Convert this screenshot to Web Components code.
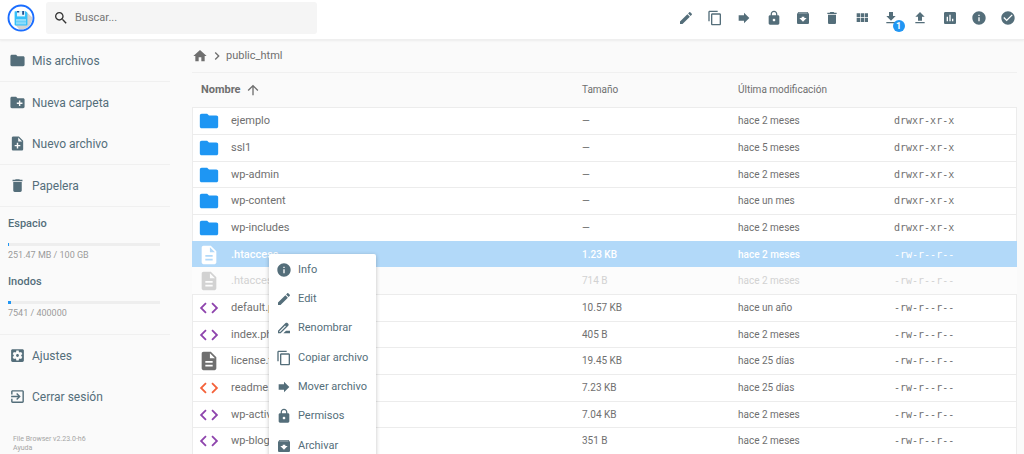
<!DOCTYPE html>
<html lang="es">
<head>
<meta charset="utf-8">
<meta name="viewport" content="width=device-width, initial-scale=1">
<title>public_html - File Browser</title>
<style>
html, body { margin: 0; height: 100%; overflow: hidden; }
body { background: #fafafa; color: #6f6f6f; font-family: Roboto, "Liberation Sans", sans-serif; font-size: 11px; }
</style>
</head>
<body>
<file-manager></file-manager>
<script>
const ICONS = {
  folder: 'M10 4H4c-1.1 0-1.99.9-1.99 2L2 18c0 1.1.9 2 2 2h16c1.1 0 2-.9 2-2V8c0-1.1-.9-2-2-2h-8l-2-2z',
  newFolder: 'M20 6h-8l-2-2H4c-1.11 0-1.99.89-1.99 2L2 18c0 1.11.89 2 2 2h16c1.11 0 2-.89 2-2V8c0-1.11-.89-2-2-2zm-1 8h-3v3h-2v-3h-3v-2h3V9h2v3h3v2z',
  newFile: 'M14 2H6c-1.1 0-1.99.9-1.99 2L4 20c0 1.1.89 2 1.99 2H18c1.1 0 2-.9 2-2V8l-6-6zm2 14h-3v3h-2v-3H8v-2h3v-3h2v3h3v2zm-3-7V3.5L18.5 9H13z',
  file: 'M14 2H6c-1.1 0-1.99.9-1.99 2L4 20c0 1.1.89 2 1.99 2H18c1.1 0 2-.9 2-2V8l-6-6zm2 16H8v-2h8v2zm0-4H8v-2h8v2zm-3-5V3.5L18.5 9H13z',
  code: 'M9.4 16.6L4.8 12l4.6-4.6L8 6l-6 6 6 6 1.4-1.4zm5.2 0l4.6-4.6-4.6-4.6L16 6l6 6-6 6-1.4-1.4z',
  edit: 'M3 17.25V21h3.75L17.81 9.94l-3.75-3.75L3 17.25zM20.71 7.04c.39-.39.39-1.02 0-1.41l-2.34-2.34c-.39-.39-1.02-.39-1.41 0l-1.83 1.83 3.75 3.75 1.83-1.83z',
  rename: 'M18.41 5.8L17.2 4.59c-.78-.78-2.05-.78-2.83 0l-2.68 2.68L3 15.96V20h4.04l8.74-8.74 2.63-2.63c.79-.78.79-2.05 0-2.83zM6.21 18H5v-1.21l8.66-8.66 1.21 1.21L6.21 18zM11 20l4-4h6v4H11z',
  copy: 'M16 1H4c-1.1 0-2 .9-2 2v14h2V3h12V1zm3 4H8c-1.1 0-2 .9-2 2v14c0 1.1.9 2 2 2h11c1.1 0 2-.9 2-2V7c0-1.1-.9-2-2-2zm0 16H8V7h11v14z',
  forward: 'M12 8V4l8 8-8 8v-4H4V8z',
  lock: 'M18 8h-1V6c0-2.76-2.24-5-5-5S7 3.24 7 6v2H6c-1.1 0-2 .9-2 2v10c0 1.1.9 2 2 2h12c1.1 0 2-.9 2-2V10c0-1.1-.9-2-2-2zm-6 9c-1.1 0-2-.9-2-2s.9-2 2-2 2 .9 2 2-.9 2-2 2zm3.1-9H8.9V6c0-1.71 1.39-3.1 3.1-3.1 1.71 0 3.1 1.39 3.1 3.1v2z',
  archive: 'M20.54 5.23l-1.39-1.68C18.88 3.21 18.47 3 18 3H6c-.47 0-.88.21-1.16.55L3.46 5.23C3.17 5.57 3 6.02 3 6.5V19c0 1.1.9 2 2 2h14c1.1 0 2-.9 2-2V6.5c0-.48-.17-.93-.46-1.27zM12 17.5L6.5 12H10v-2h4v2h3.5L12 17.5zM5.12 5l.81-1h12l.94 1H5.12z',
  trash: 'M6 19c0 1.1.9 2 2 2h8c1.1 0 2-.9 2-2V7H6v12zM19 4h-3.5l-1-1h-5l-1 1H5v2h14V4z',
  grid: 'M4 11h5V5H4v6zm0 7h5v-6H4v6zm6 0h5v-6h-5v6zm6 0h5v-6h-5v6zm-6-7h5V5h-5v6zm6-6v6h5V5h-5z',
  download: 'M19 9h-4V3H9v6H5l7 7 7-7zM5 18v2h14v-2H5z',
  upload: 'M9 16h6v-6h4l-7-7-7 7h4zm-4 2h14v2H5z',
  chart: 'M19 3H5c-1.1 0-2 .9-2 2v14c0 1.1.9 2 2 2h14c1.1 0 2-.9 2-2V5c0-1.1-.9-2-2-2zM9 17H7v-7h2v7zm4 0h-2V7h2v10zm4 0h-2v-4h2v4z',
  info: 'M12 2C6.48 2 2 6.48 2 12s4.48 10 10 10 10-4.48 10-10S17.52 2 12 2zm1 15h-2v-6h2v6zm0-8h-2V7h2v2z',
  check: 'M12 2C6.48 2 2 6.48 2 12s4.48 10 10 10 10-4.48 10-10S17.52 2 12 2zm-2 15l-5-5 1.41-1.41L10 14.17l7.59-7.59L19 8l-9 9z',
  search: 'M15.5 14h-.79l-.28-.27C15.41 12.59 16 11.11 16 9.5 16 5.91 13.09 3 9.5 3S3 5.91 3 9.5 5.91 16 9.5 16c1.61 0 3.09-.59 4.23-1.57l.27.28v.79l5 4.99L20.49 19l-4.99-5zm-6 0C7.01 14 5 11.99 5 9.5S7.01 5 9.5 5 14 7.01 14 9.5 11.99 14 9.5 14z',
  home: 'M10 20v-6h4v6h5v-8h3L12 3 2 12h3v8z',
  chevron: 'M10 6L8.59 7.41 13.17 12l-4.58 4.59L10 18l6-6z',
  up: 'M4 12l1.41 1.41L11 7.83V20h2V7.83l5.58 5.59L20 12l-8-8-8 8z',
  settings: 'M12 10c-1.1 0-2 .9-2 2s.9 2 2 2 2-.9 2-2-.9-2-2-2zm7-7H5c-1.11 0-2 .9-2 2v14c0 1.1.89 2 2 2h14c1.11 0 2-.9 2-2V5c0-1.1-.89-2-2-2zm-1.75 9c0 .23-.02.46-.05.68l1.48 1.16c.13.11.17.3.08.45l-1.4 2.42c-.09.15-.27.21-.43.15l-1.74-.7c-.36.28-.76.51-1.18.69l-.26 1.85c-.03.17-.18.3-.35.3h-2.8c-.17 0-.32-.13-.35-.29l-.26-1.85c-.43-.18-.82-.41-1.18-.69l-1.74.7c-.16.06-.34 0-.43-.15l-1.4-2.42c-.09-.15-.05-.34.08-.45l1.48-1.16c-.03-.23-.05-.46-.05-.69 0-.23.02-.46.05-.68l-1.48-1.16c-.13-.11-.17-.3-.08-.45l1.4-2.42c.09-.15.27-.21.43-.15l1.74.7c.36-.28.76-.51 1.18-.69l.26-1.85c.03-.17.18-.3.35-.3h2.8c.17 0 .32.13.35.29l.26 1.85c.43.18.82.41 1.18.69l1.74-.7c.16-.06.34 0 .43.15l1.4 2.42c.09.15.05.34-.08.45l-1.48 1.16c.03.23.05.46.05.69z',
  exit: 'M10.09 15.59L11.5 17l5-5-5-5-1.41 1.41L12.67 11H3v2h9.67l-2.58 2.59zM19 3H5c-1.11 0-2 .9-2 2v4h2V5h14v14H5v-4H3v4c0 1.1.89 2 2 2h14c1.1 0 2-.9 2-2V5c0-1.1-.9-2-2-2z'
};

function define(name, render) {
  customElements.define(name, class extends HTMLElement {
    connectedCallback() {
      if (this.shadowRoot) return;
      this.attachShadow({ mode: 'open' }).innerHTML = render(this);
    }
  });
}

define('md-icon', el => `
  <style>
    :host { display: block; flex: none; width: var(--icon-size, 16px); height: var(--icon-size, 16px); }
    svg { display: block; width: 100%; height: 100%; fill: currentColor; }
  </style>
  <svg viewBox="0 0 24 24" aria-hidden="true"><path d="${ICONS[el.getAttribute('name')]}"/></svg>`);

define('app-logo', () => `
  <style>:host { display: block; flex: none; width: 28px; height: 28px; } svg { display: block; }</style>
  <svg width="28" height="28" viewBox="0 0 28 28" role="img" aria-label="File Browser">
    <circle cx="14" cy="14" r="12.6" fill="#fff"/>
    <path d="M19.500 8l5.600 5.200A11.300 11.300 0 0 1 12 25.200L8.500 21z" fill="#d3d3d3"/>
    <path d="M8 7.200h10.800L20.400 8.800v12a.8.8 0 0 1-.8.800H8.400a.8.8 0 0 1-.8-.8V8a.8.8 0 0 1 .4-.8z" fill="#35c0fa"/>
    <path d="M10 7.200h8v5.200h-8z" fill="#e8f7fe"/><path d="M10 7h2.200v1.600H10zM15.200 7h1.900v3.800h-1.900z" fill="#1d4f91"/>
    <path d="M9 15h10v5.400H9z" fill="#8edcfb"/><path d="M9 17.300h10v.9H9z" fill="#5fcaf8"/>
    <circle cx="14" cy="14" r="12.500" fill="none" stroke="#1a6dff" stroke-width="1.900"/>
  </svg>`);

define('search-box', () => `
  <style>
    :host { display: block; }
    label { display: flex; align-items: center; height: 32px; padding: 0 7px; gap: 6px; background: #f5f5f5; border-radius: 3px; color: #333; }
    input { flex: 1; min-width: 0; border: 0; padding: 0; outline: 0; background: none; color: #333; font: inherit; line-height: 16px; }
    input::placeholder { color: #757575; opacity: 1; }
  </style>
  <label><md-icon name="search"></md-icon><input type="text" placeholder="Buscar..." aria-label="Buscar"></label>`);

define('tool-button', el => `
  <style>
    :host { display: block; }
    button { position: relative; display: grid; place-items: center; width: 100%; height: 28px; border: 0; padding: 0; background: none; color: #546e7a; font: inherit; }
    span { position: absolute; right: 1px; bottom: 0; width: 12px; height: 12px; border-radius: 50%; background: #2196f3; color: #fff; font-size: 9px; font-weight: 700; line-height: 12px; text-align: center; }
  </style>
  <button type="button" aria-label="${el.getAttribute('label')}"><md-icon name="${el.getAttribute('icon')}"></md-icon>${el.hasAttribute('count') ? `<span>${el.getAttribute('count')}</span>` : ''}</button>`);

define('app-header', () => `
  <style>
    :host { display: flex; align-items: flex-start; height: 40px; box-sizing: border-box; padding: 2px 1px 0 7px; background: #fff; border-bottom: 1px solid #efefef; box-shadow: 0 1px 2px rgba(0,0,0,.06); position: relative; }
    app-logo { margin-top: 2px; }
    search-box { flex: 0 1 271px; margin-left: 11px; }
    .tools { display: grid; grid-template-columns: repeat(12, 1fr); flex: 0 0 352px; margin: 2px 0 0 auto; }
  </style>
  <app-logo></app-logo>
  <search-box></search-box>
  <div class="tools" role="toolbar">
    <tool-button icon="edit" label="Renombrar"></tool-button>
    <tool-button icon="copy" label="Copiar archivo"></tool-button>
    <tool-button icon="forward" label="Mover archivo"></tool-button>
    <tool-button icon="lock" label="Permisos"></tool-button>
    <tool-button icon="archive" label="Archivar"></tool-button>
    <tool-button icon="trash" label="Eliminar"></tool-button>
    <tool-button icon="grid" label="Cambiar vista"></tool-button>
    <tool-button icon="download" label="Descargar" count="1"></tool-button>
    <tool-button icon="upload" label="Subir"></tool-button>
    <tool-button icon="chart" label="Uso"></tool-button>
    <tool-button icon="info" label="Info"></tool-button>
    <tool-button icon="check" label="Seleccionar"></tool-button>
  </div>`);

define('nav-item', el => `
  <style>
    :host { display: block; }
    button { display: flex; align-items: center; gap: 6px; width: 100%; height: 41px; border: 0; padding: 0 9px; background: none; color: #546e7a; font: inherit; font-size: 12px; line-height: 16px; text-align: left; --icon-size: 17px; }
  </style>
  <button type="button"><md-icon name="${el.getAttribute('icon')}"></md-icon><slot></slot></button>`);

define('usage-meter', el => `
  <style>
    :host { display: block; padding: 0 10px 0 8px; }
    label { display: block; color: #546e7a; font-weight: 500; line-height: 16px; }
    progress { appearance: none; display: block; width: 100%; height: 3px; margin: 11px 0 3px; border: 0; background: #eee; }
    progress::-webkit-progress-bar { background: #eee; }
    progress::-webkit-progress-value { background: #2196f3; }
    p { margin: 0; color: #9b9b9b; font-size: 9px; line-height: 12px; }
  </style>
  <label for="m">${el.getAttribute('label')}</label>
  <progress id="m" max="100" value="${el.getAttribute('value')}"></progress>
  <p><slot></slot></p>`);

define('side-bar', () => `
  <style>
    :host { display: block; }
    section { border-bottom: 1px solid #f0f0f0; }
    .usage { display: grid; gap: 13px; padding: 9px 0 15px; }
    .last { border: 0; }
    footer { display: grid; justify-items: start; padding: 18px 13px 0; color: #a5a5a5; font-size: 7px; line-height: 9px; }
    a { color: inherit; text-decoration: none; }
  </style>
  <section><nav-item icon="folder">Mis archivos</nav-item></section>
  <section><nav-item icon="newFolder">Nueva carpeta</nav-item><nav-item icon="newFile">Nuevo archivo</nav-item></section>
  <section><nav-item icon="trash">Papelera</nav-item></section>
  <section class="usage">
    <usage-meter label="Espacio" value="0.25">251.47 MB / 100 GB</usage-meter>
    <usage-meter label="Inodos" value="1.9">7541 / 400000</usage-meter>
  </section>
  <section class="last"><nav-item icon="settings">Ajustes</nav-item><nav-item icon="exit">Cerrar sesión</nav-item></section>
  <footer><span>File Browser v2.23.0-h6</span><a href="#ayuda">Ayuda</a></footer>`);

define('bread-crumbs', () => `
  <style>
    :host { display: block; }
    nav { display: flex; align-items: center; height: 32px; border-bottom: 1px solid #f0f0f0; gap: 1px; }
    a { color: inherit; text-decoration: none; line-height: 16px; }
  </style>
  <nav aria-label="Ruta"><a href="#/" aria-label="Inicio"><md-icon name="home"></md-icon></a><md-icon name="chevron"></md-icon><a href="#/public_html">public_html</a></nav>`);

const D = 'drwxr-xr-x', F = '-rw-r--r--', M2 = 'hace 2 meses';
const ROWS = [
  ['folder', 'blue', 'ejemplo', '—', M2, D],
  ['folder', 'blue', 'ssl1', '—', 'hace 5 meses', D],
  ['folder', 'blue', 'wp-admin', '—', M2, D],
  ['folder', 'blue', 'wp-content', '—', 'hace un mes', D],
  ['folder', 'blue', 'wp-includes', '—', M2, D],
  ['file', '', '.htaccess', '1.23 KB', M2, F, 'selected'],
  ['file', '', '.htaccess.bk', '714 B', M2, F, 'dim'],
  ['code', 'purple', 'default.php', '10.57 KB', 'hace un año', F],
  ['code', 'purple', 'index.php', '405 B', M2, F],
  ['file', '', 'license.txt', '19.45 KB', 'hace 25 días', F],
  ['code', 'orange', 'readme.html', '7.23 KB', 'hace 25 días', F],
  ['code', 'purple', 'wp-activate.php', '7.04 KB', M2, F],
  ['code', 'purple', 'wp-blog-header.php', '351 B', M2, F]
];

define('file-list', () => `
  <style>
    :host { display: block; }
    table { width: 100%; table-layout: fixed; border-collapse: separate; border-spacing: 0; font-size: 10px; line-height: 16px; }
    .c2, .c3 { width: 156px; } .c4 { width: 123px; }
    th, td { padding: 0; text-align: left; font-weight: 400; white-space: nowrap; }
    th { height: 34px; }
    th button { display: flex; align-items: center; gap: 4px; border: 0; padding: 0 0 0 9px; background: none; color: inherit; font: inherit; font-size: 11px; font-weight: 700; }
    tbody td { height: 26px; background: #fff; border-top: 1px solid #ececec; }
    tbody tr:nth-child(3n) td { height: 25px; }
    td:first-child { border-left: 1px solid #ececec; }
    td:last-child { border-right: 1px solid #ececec; font-family: "DejaVu Sans Mono", monospace; }
    .name { display: flex; align-items: center; gap: 11px; padding-left: 5px; font-size: 11px; --icon-size: 22px; }
    .blue { color: #1e96f3; } .purple { color: #8e44ad; } .orange { color: #f4623a; }
    .selected td { background: #b2d9f9; border-color: #b2d9f9; color: #fff; font-weight: 500; }
    .dim td { background: #fcfcfc; border-color: #fcfcfc; color: #d2d2d2; }
  </style>
  <table>
    <colgroup><col><col class="c2"><col class="c3"><col class="c4"></colgroup>
    <thead><tr><th aria-sort="ascending"><button type="button">Nombre <md-icon name="up"></md-icon></button></th><th>Tamaño</th><th>Última modificación</th><th></th></tr></thead>
    <tbody>${ROWS.map(([icon, tone, name, size, date, mode, state = '']) => `
      <tr class="${state}"><td><div class="name"><md-icon class="${tone}" name="${icon}"></md-icon><span>${name}</span></div></td><td>${size}</td><td>${date}</td><td>${mode}</td></tr>`).join('')}
    </tbody>
  </table>`);

define('menu-item', el => `
  <style>
    :host { display: block; }
    button { display: flex; align-items: center; gap: 6px; width: 100%; height: 100%; border: 0; padding: 0 7px; background: none; color: #546e7a; font: inherit; font-size: 11px; line-height: 16px; text-align: left; white-space: nowrap; }
  </style>
  <button type="button" role="menuitem"><md-icon name="${el.getAttribute('icon')}"></md-icon><slot></slot></button>`);

define('context-menu', () => `
  <style>
    :host { display: block; padding-top: 1px; background: #fff; border-radius: 2px; box-shadow: 0 1px 4px rgba(0,0,0,.24); }
    menu-item { height: 29px; }
    menu-item:nth-of-type(3n) { height: 30px; }
  </style>
  <menu-item icon="info">Info</menu-item>
  <menu-item icon="edit">Edit</menu-item>
  <menu-item icon="rename">Renombrar</menu-item>
  <menu-item icon="copy">Copiar archivo</menu-item>
  <menu-item icon="forward">Mover archivo</menu-item>
  <menu-item icon="lock">Permisos</menu-item>
  <menu-item icon="archive">Archivar</menu-item>`);

define('file-manager', () => `
  <style>
    :host { display: block; position: relative; height: 100vh; overflow: hidden; }
    .body { display: grid; grid-template-columns: 170px minmax(0, 1fr); }
    main { padding: 0 7px 0 22px; }
    context-menu { position: absolute; left: 269px; top: 254px; width: 107px; }
  </style>
  <app-header></app-header>
  <div class="body">
    <side-bar></side-bar>
    <main><bread-crumbs></bread-crumbs><file-list></file-list></main>
  </div>
  <context-menu role="menu"></context-menu>`);
</script>
</body>
</html>
